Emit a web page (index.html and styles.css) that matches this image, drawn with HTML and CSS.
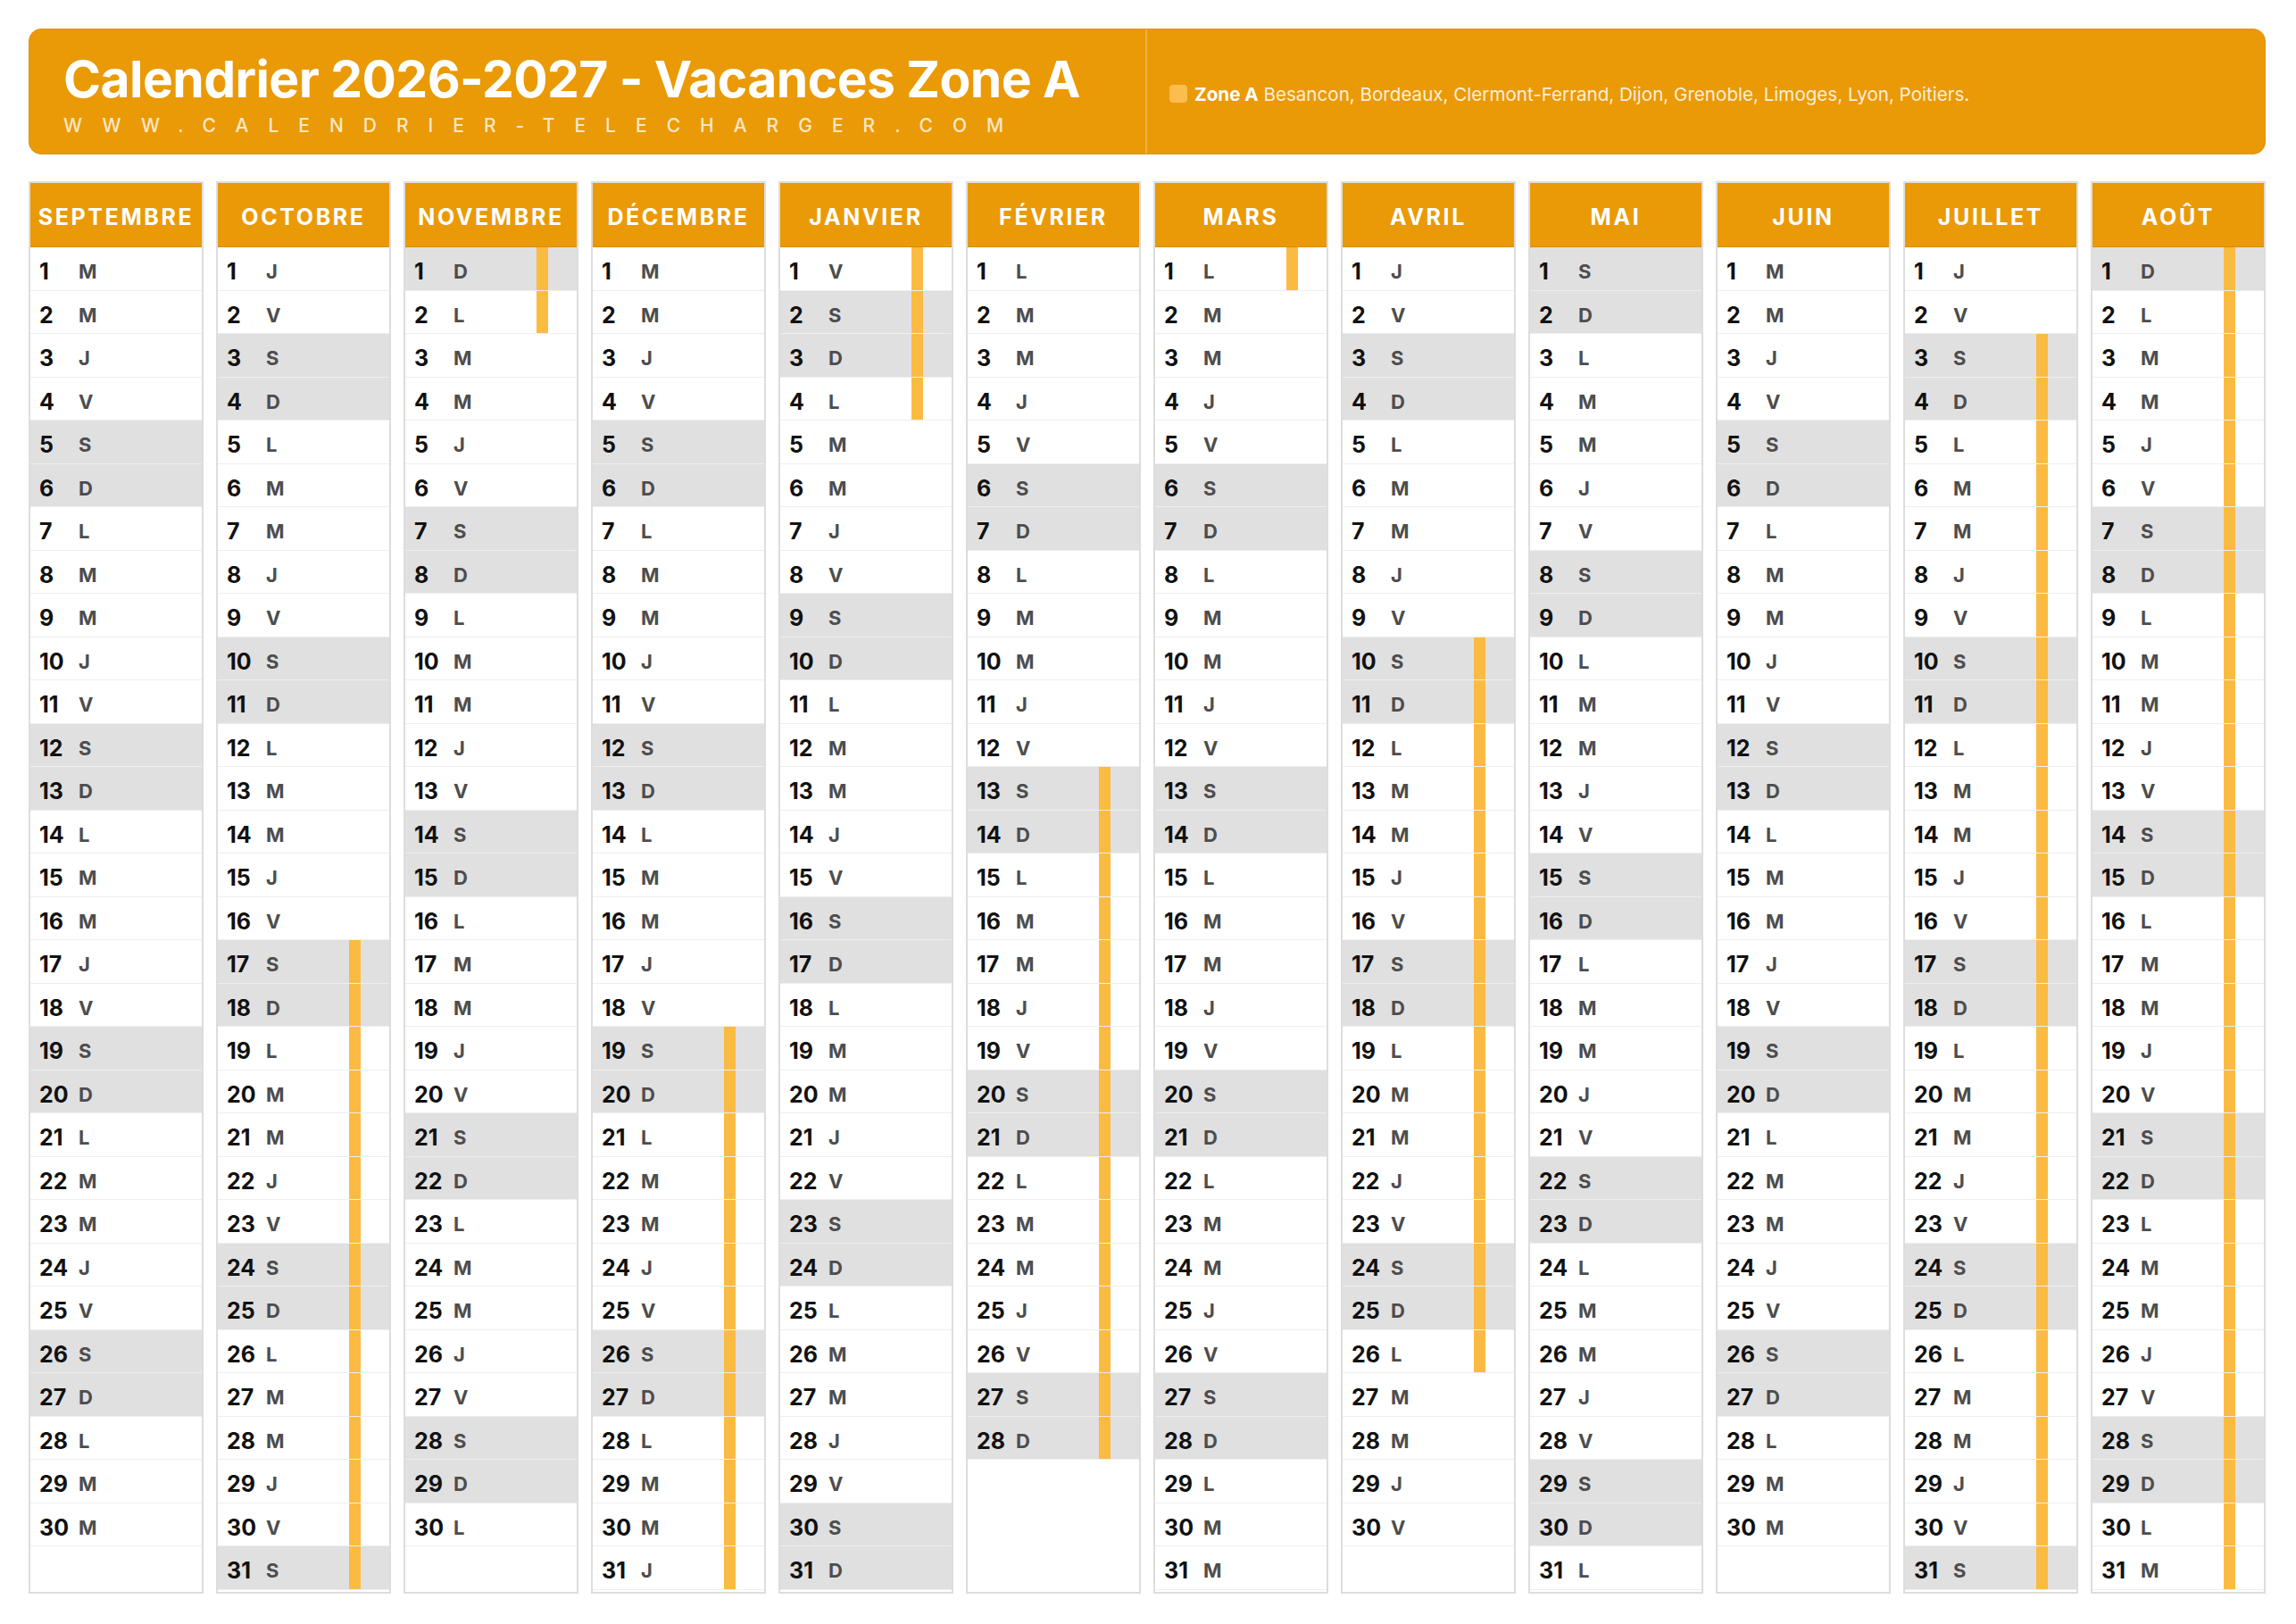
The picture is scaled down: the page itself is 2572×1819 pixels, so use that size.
FILE: index.html
```html
<!DOCTYPE html>
<html lang="fr">
<head>
<meta charset="utf-8">
<title>Calendrier 2026-2027 - Vacances Zone A</title>
<link rel="stylesheet" href="styles.css">
</head>
<body>
<div class="page">
  <header class="banner">
    <div class="banner-main">
      <h1 class="title">Calendrier 2026-2027 - Vacances Zone A</h1>
      <div class="site">WWW.CALENDRIER-TELECHARGER.COM</div>
    </div>
    <div class="legend">
      <span class="swatch"></span>
      <span class="legend-text"><strong>Zone A</strong> Besancon, Bordeaux, Clermont-Ferrand, Dijon, Grenoble, Limoges, Lyon, Poitiers.</span>
    </div>
  </header>

  <main class="months">
    <section class="month">
      <h2 class="month-name">SEPTEMBRE</h2>
      <ul class="days">
        <li><b>1</b><i>M</i></li>
        <li><b>2</b><i>M</i></li>
        <li><b>3</b><i>J</i></li>
        <li><b>4</b><i>V</i></li>
        <li class="w"><b>5</b><i>S</i></li>
        <li class="w"><b>6</b><i>D</i></li>
        <li><b>7</b><i>L</i></li>
        <li><b>8</b><i>M</i></li>
        <li><b>9</b><i>M</i></li>
        <li><b>10</b><i>J</i></li>
        <li><b>11</b><i>V</i></li>
        <li class="w"><b>12</b><i>S</i></li>
        <li class="w"><b>13</b><i>D</i></li>
        <li><b>14</b><i>L</i></li>
        <li><b>15</b><i>M</i></li>
        <li><b>16</b><i>M</i></li>
        <li><b>17</b><i>J</i></li>
        <li><b>18</b><i>V</i></li>
        <li class="w"><b>19</b><i>S</i></li>
        <li class="w"><b>20</b><i>D</i></li>
        <li><b>21</b><i>L</i></li>
        <li><b>22</b><i>M</i></li>
        <li><b>23</b><i>M</i></li>
        <li><b>24</b><i>J</i></li>
        <li><b>25</b><i>V</i></li>
        <li class="w"><b>26</b><i>S</i></li>
        <li class="w"><b>27</b><i>D</i></li>
        <li><b>28</b><i>L</i></li>
        <li><b>29</b><i>M</i></li>
        <li><b>30</b><i>M</i></li>
      </ul>
    </section>

    <section class="month">
      <h2 class="month-name">OCTOBRE</h2>
      <ul class="days">
        <li><b>1</b><i>J</i></li>
        <li><b>2</b><i>V</i></li>
        <li class="w"><b>3</b><i>S</i></li>
        <li class="w"><b>4</b><i>D</i></li>
        <li><b>5</b><i>L</i></li>
        <li><b>6</b><i>M</i></li>
        <li><b>7</b><i>M</i></li>
        <li><b>8</b><i>J</i></li>
        <li><b>9</b><i>V</i></li>
        <li class="w"><b>10</b><i>S</i></li>
        <li class="w"><b>11</b><i>D</i></li>
        <li><b>12</b><i>L</i></li>
        <li><b>13</b><i>M</i></li>
        <li><b>14</b><i>M</i></li>
        <li><b>15</b><i>J</i></li>
        <li><b>16</b><i>V</i></li>
        <li class="w v"><b>17</b><i>S</i></li>
        <li class="w v"><b>18</b><i>D</i></li>
        <li class="v"><b>19</b><i>L</i></li>
        <li class="v"><b>20</b><i>M</i></li>
        <li class="v"><b>21</b><i>M</i></li>
        <li class="v"><b>22</b><i>J</i></li>
        <li class="v"><b>23</b><i>V</i></li>
        <li class="w v"><b>24</b><i>S</i></li>
        <li class="w v"><b>25</b><i>D</i></li>
        <li class="v"><b>26</b><i>L</i></li>
        <li class="v"><b>27</b><i>M</i></li>
        <li class="v"><b>28</b><i>M</i></li>
        <li class="v"><b>29</b><i>J</i></li>
        <li class="v"><b>30</b><i>V</i></li>
        <li class="w v"><b>31</b><i>S</i></li>
      </ul>
    </section>

    <section class="month">
      <h2 class="month-name">NOVEMBRE</h2>
      <ul class="days">
        <li class="w v"><b>1</b><i>D</i></li>
        <li class="v"><b>2</b><i>L</i></li>
        <li><b>3</b><i>M</i></li>
        <li><b>4</b><i>M</i></li>
        <li><b>5</b><i>J</i></li>
        <li><b>6</b><i>V</i></li>
        <li class="w"><b>7</b><i>S</i></li>
        <li class="w"><b>8</b><i>D</i></li>
        <li><b>9</b><i>L</i></li>
        <li><b>10</b><i>M</i></li>
        <li><b>11</b><i>M</i></li>
        <li><b>12</b><i>J</i></li>
        <li><b>13</b><i>V</i></li>
        <li class="w"><b>14</b><i>S</i></li>
        <li class="w"><b>15</b><i>D</i></li>
        <li><b>16</b><i>L</i></li>
        <li><b>17</b><i>M</i></li>
        <li><b>18</b><i>M</i></li>
        <li><b>19</b><i>J</i></li>
        <li><b>20</b><i>V</i></li>
        <li class="w"><b>21</b><i>S</i></li>
        <li class="w"><b>22</b><i>D</i></li>
        <li><b>23</b><i>L</i></li>
        <li><b>24</b><i>M</i></li>
        <li><b>25</b><i>M</i></li>
        <li><b>26</b><i>J</i></li>
        <li><b>27</b><i>V</i></li>
        <li class="w"><b>28</b><i>S</i></li>
        <li class="w"><b>29</b><i>D</i></li>
        <li><b>30</b><i>L</i></li>
      </ul>
    </section>

    <section class="month">
      <h2 class="month-name">DÉCEMBRE</h2>
      <ul class="days">
        <li><b>1</b><i>M</i></li>
        <li><b>2</b><i>M</i></li>
        <li><b>3</b><i>J</i></li>
        <li><b>4</b><i>V</i></li>
        <li class="w"><b>5</b><i>S</i></li>
        <li class="w"><b>6</b><i>D</i></li>
        <li><b>7</b><i>L</i></li>
        <li><b>8</b><i>M</i></li>
        <li><b>9</b><i>M</i></li>
        <li><b>10</b><i>J</i></li>
        <li><b>11</b><i>V</i></li>
        <li class="w"><b>12</b><i>S</i></li>
        <li class="w"><b>13</b><i>D</i></li>
        <li><b>14</b><i>L</i></li>
        <li><b>15</b><i>M</i></li>
        <li><b>16</b><i>M</i></li>
        <li><b>17</b><i>J</i></li>
        <li><b>18</b><i>V</i></li>
        <li class="w v"><b>19</b><i>S</i></li>
        <li class="w v"><b>20</b><i>D</i></li>
        <li class="v"><b>21</b><i>L</i></li>
        <li class="v"><b>22</b><i>M</i></li>
        <li class="v"><b>23</b><i>M</i></li>
        <li class="v"><b>24</b><i>J</i></li>
        <li class="v"><b>25</b><i>V</i></li>
        <li class="w v"><b>26</b><i>S</i></li>
        <li class="w v"><b>27</b><i>D</i></li>
        <li class="v"><b>28</b><i>L</i></li>
        <li class="v"><b>29</b><i>M</i></li>
        <li class="v"><b>30</b><i>M</i></li>
        <li class="v"><b>31</b><i>J</i></li>
      </ul>
    </section>

    <section class="month">
      <h2 class="month-name">JANVIER</h2>
      <ul class="days">
        <li class="v"><b>1</b><i>V</i></li>
        <li class="w v"><b>2</b><i>S</i></li>
        <li class="w v"><b>3</b><i>D</i></li>
        <li class="v"><b>4</b><i>L</i></li>
        <li><b>5</b><i>M</i></li>
        <li><b>6</b><i>M</i></li>
        <li><b>7</b><i>J</i></li>
        <li><b>8</b><i>V</i></li>
        <li class="w"><b>9</b><i>S</i></li>
        <li class="w"><b>10</b><i>D</i></li>
        <li><b>11</b><i>L</i></li>
        <li><b>12</b><i>M</i></li>
        <li><b>13</b><i>M</i></li>
        <li><b>14</b><i>J</i></li>
        <li><b>15</b><i>V</i></li>
        <li class="w"><b>16</b><i>S</i></li>
        <li class="w"><b>17</b><i>D</i></li>
        <li><b>18</b><i>L</i></li>
        <li><b>19</b><i>M</i></li>
        <li><b>20</b><i>M</i></li>
        <li><b>21</b><i>J</i></li>
        <li><b>22</b><i>V</i></li>
        <li class="w"><b>23</b><i>S</i></li>
        <li class="w"><b>24</b><i>D</i></li>
        <li><b>25</b><i>L</i></li>
        <li><b>26</b><i>M</i></li>
        <li><b>27</b><i>M</i></li>
        <li><b>28</b><i>J</i></li>
        <li><b>29</b><i>V</i></li>
        <li class="w"><b>30</b><i>S</i></li>
        <li class="w"><b>31</b><i>D</i></li>
      </ul>
    </section>

    <section class="month">
      <h2 class="month-name">FÉVRIER</h2>
      <ul class="days">
        <li><b>1</b><i>L</i></li>
        <li><b>2</b><i>M</i></li>
        <li><b>3</b><i>M</i></li>
        <li><b>4</b><i>J</i></li>
        <li><b>5</b><i>V</i></li>
        <li class="w"><b>6</b><i>S</i></li>
        <li class="w"><b>7</b><i>D</i></li>
        <li><b>8</b><i>L</i></li>
        <li><b>9</b><i>M</i></li>
        <li><b>10</b><i>M</i></li>
        <li><b>11</b><i>J</i></li>
        <li><b>12</b><i>V</i></li>
        <li class="w v"><b>13</b><i>S</i></li>
        <li class="w v"><b>14</b><i>D</i></li>
        <li class="v"><b>15</b><i>L</i></li>
        <li class="v"><b>16</b><i>M</i></li>
        <li class="v"><b>17</b><i>M</i></li>
        <li class="v"><b>18</b><i>J</i></li>
        <li class="v"><b>19</b><i>V</i></li>
        <li class="w v"><b>20</b><i>S</i></li>
        <li class="w v"><b>21</b><i>D</i></li>
        <li class="v"><b>22</b><i>L</i></li>
        <li class="v"><b>23</b><i>M</i></li>
        <li class="v"><b>24</b><i>M</i></li>
        <li class="v"><b>25</b><i>J</i></li>
        <li class="v"><b>26</b><i>V</i></li>
        <li class="w v"><b>27</b><i>S</i></li>
        <li class="w v"><b>28</b><i>D</i></li>
      </ul>
    </section>

    <section class="month">
      <h2 class="month-name">MARS</h2>
      <ul class="days">
        <li class="v"><b>1</b><i>L</i></li>
        <li><b>2</b><i>M</i></li>
        <li><b>3</b><i>M</i></li>
        <li><b>4</b><i>J</i></li>
        <li><b>5</b><i>V</i></li>
        <li class="w"><b>6</b><i>S</i></li>
        <li class="w"><b>7</b><i>D</i></li>
        <li><b>8</b><i>L</i></li>
        <li><b>9</b><i>M</i></li>
        <li><b>10</b><i>M</i></li>
        <li><b>11</b><i>J</i></li>
        <li><b>12</b><i>V</i></li>
        <li class="w"><b>13</b><i>S</i></li>
        <li class="w"><b>14</b><i>D</i></li>
        <li><b>15</b><i>L</i></li>
        <li><b>16</b><i>M</i></li>
        <li><b>17</b><i>M</i></li>
        <li><b>18</b><i>J</i></li>
        <li><b>19</b><i>V</i></li>
        <li class="w"><b>20</b><i>S</i></li>
        <li class="w"><b>21</b><i>D</i></li>
        <li><b>22</b><i>L</i></li>
        <li><b>23</b><i>M</i></li>
        <li><b>24</b><i>M</i></li>
        <li><b>25</b><i>J</i></li>
        <li><b>26</b><i>V</i></li>
        <li class="w"><b>27</b><i>S</i></li>
        <li class="w"><b>28</b><i>D</i></li>
        <li><b>29</b><i>L</i></li>
        <li><b>30</b><i>M</i></li>
        <li><b>31</b><i>M</i></li>
      </ul>
    </section>

    <section class="month">
      <h2 class="month-name">AVRIL</h2>
      <ul class="days">
        <li><b>1</b><i>J</i></li>
        <li><b>2</b><i>V</i></li>
        <li class="w"><b>3</b><i>S</i></li>
        <li class="w"><b>4</b><i>D</i></li>
        <li><b>5</b><i>L</i></li>
        <li><b>6</b><i>M</i></li>
        <li><b>7</b><i>M</i></li>
        <li><b>8</b><i>J</i></li>
        <li><b>9</b><i>V</i></li>
        <li class="w v"><b>10</b><i>S</i></li>
        <li class="w v"><b>11</b><i>D</i></li>
        <li class="v"><b>12</b><i>L</i></li>
        <li class="v"><b>13</b><i>M</i></li>
        <li class="v"><b>14</b><i>M</i></li>
        <li class="v"><b>15</b><i>J</i></li>
        <li class="v"><b>16</b><i>V</i></li>
        <li class="w v"><b>17</b><i>S</i></li>
        <li class="w v"><b>18</b><i>D</i></li>
        <li class="v"><b>19</b><i>L</i></li>
        <li class="v"><b>20</b><i>M</i></li>
        <li class="v"><b>21</b><i>M</i></li>
        <li class="v"><b>22</b><i>J</i></li>
        <li class="v"><b>23</b><i>V</i></li>
        <li class="w v"><b>24</b><i>S</i></li>
        <li class="w v"><b>25</b><i>D</i></li>
        <li class="v"><b>26</b><i>L</i></li>
        <li><b>27</b><i>M</i></li>
        <li><b>28</b><i>M</i></li>
        <li><b>29</b><i>J</i></li>
        <li><b>30</b><i>V</i></li>
      </ul>
    </section>

    <section class="month">
      <h2 class="month-name">MAI</h2>
      <ul class="days">
        <li class="w"><b>1</b><i>S</i></li>
        <li class="w"><b>2</b><i>D</i></li>
        <li><b>3</b><i>L</i></li>
        <li><b>4</b><i>M</i></li>
        <li><b>5</b><i>M</i></li>
        <li><b>6</b><i>J</i></li>
        <li><b>7</b><i>V</i></li>
        <li class="w"><b>8</b><i>S</i></li>
        <li class="w"><b>9</b><i>D</i></li>
        <li><b>10</b><i>L</i></li>
        <li><b>11</b><i>M</i></li>
        <li><b>12</b><i>M</i></li>
        <li><b>13</b><i>J</i></li>
        <li><b>14</b><i>V</i></li>
        <li class="w"><b>15</b><i>S</i></li>
        <li class="w"><b>16</b><i>D</i></li>
        <li><b>17</b><i>L</i></li>
        <li><b>18</b><i>M</i></li>
        <li><b>19</b><i>M</i></li>
        <li><b>20</b><i>J</i></li>
        <li><b>21</b><i>V</i></li>
        <li class="w"><b>22</b><i>S</i></li>
        <li class="w"><b>23</b><i>D</i></li>
        <li><b>24</b><i>L</i></li>
        <li><b>25</b><i>M</i></li>
        <li><b>26</b><i>M</i></li>
        <li><b>27</b><i>J</i></li>
        <li><b>28</b><i>V</i></li>
        <li class="w"><b>29</b><i>S</i></li>
        <li class="w"><b>30</b><i>D</i></li>
        <li><b>31</b><i>L</i></li>
      </ul>
    </section>

    <section class="month">
      <h2 class="month-name">JUIN</h2>
      <ul class="days">
        <li><b>1</b><i>M</i></li>
        <li><b>2</b><i>M</i></li>
        <li><b>3</b><i>J</i></li>
        <li><b>4</b><i>V</i></li>
        <li class="w"><b>5</b><i>S</i></li>
        <li class="w"><b>6</b><i>D</i></li>
        <li><b>7</b><i>L</i></li>
        <li><b>8</b><i>M</i></li>
        <li><b>9</b><i>M</i></li>
        <li><b>10</b><i>J</i></li>
        <li><b>11</b><i>V</i></li>
        <li class="w"><b>12</b><i>S</i></li>
        <li class="w"><b>13</b><i>D</i></li>
        <li><b>14</b><i>L</i></li>
        <li><b>15</b><i>M</i></li>
        <li><b>16</b><i>M</i></li>
        <li><b>17</b><i>J</i></li>
        <li><b>18</b><i>V</i></li>
        <li class="w"><b>19</b><i>S</i></li>
        <li class="w"><b>20</b><i>D</i></li>
        <li><b>21</b><i>L</i></li>
        <li><b>22</b><i>M</i></li>
        <li><b>23</b><i>M</i></li>
        <li><b>24</b><i>J</i></li>
        <li><b>25</b><i>V</i></li>
        <li class="w"><b>26</b><i>S</i></li>
        <li class="w"><b>27</b><i>D</i></li>
        <li><b>28</b><i>L</i></li>
        <li><b>29</b><i>M</i></li>
        <li><b>30</b><i>M</i></li>
      </ul>
    </section>

    <section class="month">
      <h2 class="month-name">JUILLET</h2>
      <ul class="days">
        <li><b>1</b><i>J</i></li>
        <li><b>2</b><i>V</i></li>
        <li class="w v"><b>3</b><i>S</i></li>
        <li class="w v"><b>4</b><i>D</i></li>
        <li class="v"><b>5</b><i>L</i></li>
        <li class="v"><b>6</b><i>M</i></li>
        <li class="v"><b>7</b><i>M</i></li>
        <li class="v"><b>8</b><i>J</i></li>
        <li class="v"><b>9</b><i>V</i></li>
        <li class="w v"><b>10</b><i>S</i></li>
        <li class="w v"><b>11</b><i>D</i></li>
        <li class="v"><b>12</b><i>L</i></li>
        <li class="v"><b>13</b><i>M</i></li>
        <li class="v"><b>14</b><i>M</i></li>
        <li class="v"><b>15</b><i>J</i></li>
        <li class="v"><b>16</b><i>V</i></li>
        <li class="w v"><b>17</b><i>S</i></li>
        <li class="w v"><b>18</b><i>D</i></li>
        <li class="v"><b>19</b><i>L</i></li>
        <li class="v"><b>20</b><i>M</i></li>
        <li class="v"><b>21</b><i>M</i></li>
        <li class="v"><b>22</b><i>J</i></li>
        <li class="v"><b>23</b><i>V</i></li>
        <li class="w v"><b>24</b><i>S</i></li>
        <li class="w v"><b>25</b><i>D</i></li>
        <li class="v"><b>26</b><i>L</i></li>
        <li class="v"><b>27</b><i>M</i></li>
        <li class="v"><b>28</b><i>M</i></li>
        <li class="v"><b>29</b><i>J</i></li>
        <li class="v"><b>30</b><i>V</i></li>
        <li class="w v"><b>31</b><i>S</i></li>
      </ul>
    </section>

    <section class="month">
      <h2 class="month-name">AOÛT</h2>
      <ul class="days">
        <li class="w v"><b>1</b><i>D</i></li>
        <li class="v"><b>2</b><i>L</i></li>
        <li class="v"><b>3</b><i>M</i></li>
        <li class="v"><b>4</b><i>M</i></li>
        <li class="v"><b>5</b><i>J</i></li>
        <li class="v"><b>6</b><i>V</i></li>
        <li class="w v"><b>7</b><i>S</i></li>
        <li class="w v"><b>8</b><i>D</i></li>
        <li class="v"><b>9</b><i>L</i></li>
        <li class="v"><b>10</b><i>M</i></li>
        <li class="v"><b>11</b><i>M</i></li>
        <li class="v"><b>12</b><i>J</i></li>
        <li class="v"><b>13</b><i>V</i></li>
        <li class="w v"><b>14</b><i>S</i></li>
        <li class="w v"><b>15</b><i>D</i></li>
        <li class="v"><b>16</b><i>L</i></li>
        <li class="v"><b>17</b><i>M</i></li>
        <li class="v"><b>18</b><i>M</i></li>
        <li class="v"><b>19</b><i>J</i></li>
        <li class="v"><b>20</b><i>V</i></li>
        <li class="w v"><b>21</b><i>S</i></li>
        <li class="w v"><b>22</b><i>D</i></li>
        <li class="v"><b>23</b><i>L</i></li>
        <li class="v"><b>24</b><i>M</i></li>
        <li class="v"><b>25</b><i>M</i></li>
        <li class="v"><b>26</b><i>J</i></li>
        <li class="v"><b>27</b><i>V</i></li>
        <li class="w v"><b>28</b><i>S</i></li>
        <li class="w v"><b>29</b><i>D</i></li>
        <li class="v"><b>30</b><i>L</i></li>
        <li class="v"><b>31</b><i>M</i></li>
      </ul>
    </section>
  </main>
</div>
</body>
</html>
```

FILE: styles.css
```css
* {
  box-sizing: border-box;
  margin: 0;
  padding: 0;
}

body {
  background: #ffffff;
  font-family: Inter, "Liberation Sans", Arial, sans-serif;
  color: #111111;
}

.page {
  padding: 32px 34px 0 32px;
}

/* ---------- banner ---------- */
.banner {
  display: flex;
  height: 141px;
  background: #ea9a06;
  border: 1px solid #e2920a;
  border-radius: 14px;
}

.banner-main {
  width: 1252px;
  padding: 27px 0 0 38px;
  border-right: 2px solid #f1b041;
}

.title {
  font-size: 57px;
  line-height: 57px;
  font-weight: 700;
  letter-spacing: -0.6px;
  color: #ffffff;
  white-space: nowrap;
}

.site {
  margin-top: 13px;
  font-size: 21px;
  line-height: 21px;
  font-weight: 500;
  letter-spacing: 22px;
  color: rgba(255, 255, 255, 0.78);
  white-space: nowrap;
}

.legend {
  display: flex;
  align-items: center;
  padding: 5px 0 0 25px;
}

.swatch {
  width: 20px;
  height: 20px;
  border-radius: 4px;
  background: #fcbd4f;
  margin-right: 8px;
}

.legend-text {
  font-size: 20.6px;
  color: rgba(255, 255, 255, 0.86);
  white-space: nowrap;
}

.legend-text strong {
  font-weight: 700;
  color: #ffffff;
}

/* ---------- months ---------- */
.months {
  display: flex;
  gap: 14px;
  margin-top: 30px;
}

.month {
  width: 196px;
  border: 2px solid #dddddd;
  padding-bottom: 2px;
}

.month-name {
  height: 72px;
  padding-top: 5px;
  display: flex;
  align-items: center;
  justify-content: center;
  background: #ea9a06;
  border-bottom: 1px solid #d88b02;
  color: #ffffff;
  font-size: 25px;
  font-weight: 700;
  letter-spacing: 2.6px;
  white-space: nowrap;
}

.days {
  list-style: none;
}

.days li {
  height: 48.5px;
  display: flex;
  align-items: center;
  padding: 7px 0 0 10px;
  border-bottom: 1px solid #eeeeee;
}

.days li.w {
  background-color: #e0e0e0;
}

.days li.v {
  background-image: linear-gradient(90deg,
      transparent 147px,
      #fbbb42 147px,
      #fbbb42 160px,
      transparent 160px);
}

.days li b {
  width: 44px;
  font-size: 25px;
  font-weight: 700;
  color: #111111;
}

.days li i {
  font-style: normal;
  font-size: 22px;
  font-weight: 700;
  color: #4d4d4d;
}
```
